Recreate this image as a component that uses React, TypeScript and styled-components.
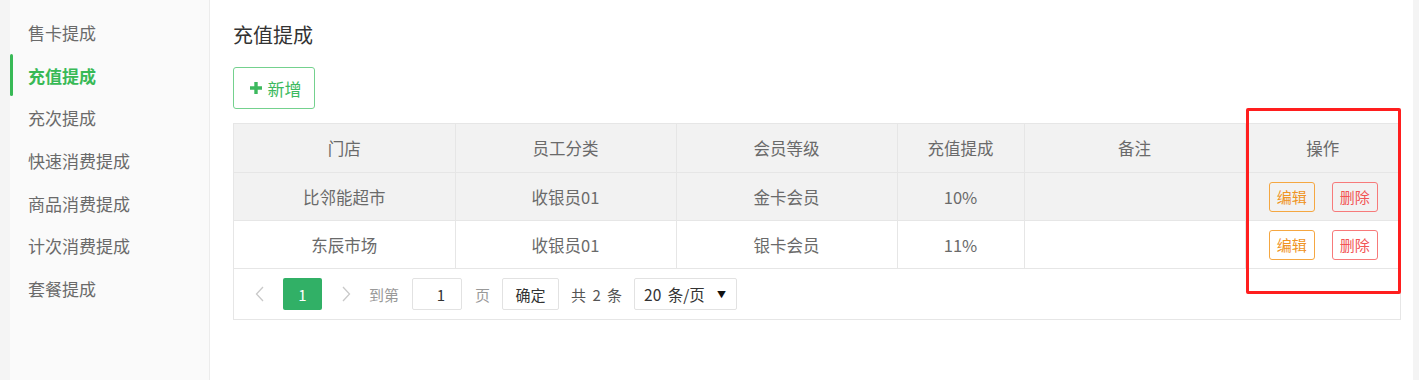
import styled, { createGlobalStyle } from "styled-components";

const GlobalStyle = createGlobalStyle`
  html, body {
    margin: 0;
    padding: 0;
    background: #ffffff;
  }
  body {
    font-family: "Noto Sans CJK SC", "Noto Sans", sans-serif;
  }
`;

const theme = {
  green: "#38b956",
  text: "#6a6a6a",
  dark: "#333333",
  line: "#e6e6e6",
  head: "#f2f2f2",
};

const Page = styled.div`
  display: flex;
  flex-direction: row;
  height: 380px;
  background: #f4f4f4;
`;

const Gutter = styled.div<{ $w: number }>`
  width: ${(p) => p.$w}px;
  flex-shrink: 0;
  background: #f4f4f4;
`;

const Sidebar = styled.nav`
  width: 199px;
  flex-shrink: 0;
  background: #fafafa;
  border-right: 1px solid #ececec;
  padding-top: 11px;
  display: flex;
  flex-direction: column;
`;

const NavItem = styled.div<{ $active?: boolean }>`
  position: relative;
  height: 42.7px;
  display: flex;
  align-items: center;
  padding-left: 18px;
  font-size: 17px;
  color: ${(p) => (p.$active ? theme.green : theme.text)};
  font-weight: ${(p) => (p.$active ? 700 : 400)};
  &::before {
    content: "";
    display: ${(p) => (p.$active ? "block" : "none")};
    position: absolute;
    left: 0;
    top: 0;
    bottom: 0;
    width: 3px;
    border-radius: 2px;
    background: ${theme.green};
  }
`;

const Main = styled.main`
  flex: 1;
  background: #ffffff;
  padding: 21px 12px 0 23px;
  display: flex;
  flex-direction: column;
  align-items: flex-start;
`;

const Title = styled.h2`
  margin: 0 0 18px 0;
  font-size: 20px;
  line-height: 28px;
  font-weight: 400;
  color: ${theme.dark};
`;

const AddButton = styled.button`
  height: 42px;
  width: 82px;
  box-sizing: border-box;
  border: 1px solid #74d18e;
  border-radius: 3px;
  background: #ffffff;
  color: #3cb95e;
  font-family: inherit;
  font-size: 17px;
  display: flex;
  align-items: center;
  justify-content: center;
  gap: 5px;
  padding: 0 0 0 2px;
  margin-bottom: 14px;
`;

const TableBox = styled.div`
  position: relative;
  width: 100%;
  box-sizing: border-box;
  border: 1px solid ${theme.line};
`;

const Table = styled.table`
  width: 100%;
  border-collapse: collapse;
  table-layout: fixed;
  font-size: 16.5px;
  color: ${theme.text};
`;

const HeadCell = styled.th`
  height: 48px;
  font-weight: 400;
  background: ${theme.head};
  border-right: 1px solid ${theme.line};
  border-bottom: 1px solid ${theme.line};
  text-align: center;
  padding: 0;
  &:last-child {
    border-right: none;
  }
`;

const Row = styled.tr<{ $shade?: boolean }>`
  background: ${(p) => (p.$shade ? theme.head : "#ffffff")};
`;

const Cell = styled.td`
  height: 47px;
  border-right: 1px solid ${theme.line};
  border-bottom: 1px solid ${theme.line};
  text-align: center;
  padding: 0;
  &:last-child {
    border-right: none;
  }
`;

const Actions = styled.div`
  display: flex;
  justify-content: center;
  gap: 17px;
  padding-left: 1px;
`;

const ActionButton = styled.button<{ $tone: "edit" | "del" }>`
  width: 46px;
  height: 30px;
  box-sizing: border-box;
  padding: 0;
  border-radius: 3px;
  background: transparent;
  font-family: inherit;
  font-size: 15px;
  border: 1px solid ${(p) => (p.$tone === "edit" ? "#f5a741" : "#f77a7a")};
  color: ${(p) => (p.$tone === "edit" ? "#ef9424" : "#f25555")};
`;

const Footer = styled.div`
  height: 50px;
  display: flex;
  align-items: center;
  padding-left: 21px;
  font-size: 15px;
  color: #999999;
`;

const Arrow = styled.span<{ $gap: number }>`
  display: flex;
  margin-right: ${(p) => p.$gap}px;
`;

const PageNum = styled.span`
  width: 39px;
  height: 32px;
  border-radius: 2px;
  background: #31b066;
  color: #ffffff;
  display: flex;
  align-items: center;
  justify-content: center;
  margin-right: 20px;
`;

const Label = styled.span<{ $gap: number; $dark?: boolean }>`
  margin-right: ${(p) => p.$gap}px;
  color: ${(p) => (p.$dark ? "#555555" : "#999999")};
  word-spacing: 3px;
`;

const Box = styled.span<{ $w: number; $gap: number }>`
  width: ${(p) => p.$w}px;
  height: 32px;
  box-sizing: border-box;
  border: 1px solid #e2e2e2;
  border-radius: 2px;
  display: flex;
  align-items: center;
  color: ${theme.dark};
  margin-right: ${(p) => p.$gap}px;
`;

const InputBox = styled(Box)`
  justify-content: flex-end;
  padding-right: 16px;
`;

const ConfirmBox = styled(Box)`
  justify-content: center;
`;

const SelectBox = styled(Box)`
  justify-content: space-between;
  padding: 0 10px 0 9px;
  font-size: 15.5px;
  word-spacing: 3px;
`;

const Caret = styled.span`
  font-size: 9px;
  color: #111111;
`;

const Highlight = styled.div`
  position: absolute;
  left: 1012px;
  top: -16px;
  width: 155px;
  height: 186px;
  box-sizing: border-box;
  border: 3px solid #ff1e1e;
  border-radius: 2px;
  pointer-events: none;
`;

const menu = ["售卡提成", "充值提成", "充次提成", "快速消费提成", "商品消费提成", "计次消费提成", "套餐提成"];
const columns = [
  { title: "门店", w: 221 },
  { title: "员工分类", w: 221 },
  { title: "会员等级", w: 221 },
  { title: "充值提成", w: 127 },
  { title: "备注", w: 221 },
  { title: "操作", w: undefined },
];
const rows = [
  { store: "比邻能超市", staff: "收银员01", level: "金卡会员", rate: "10%" },
  { store: "东辰市场", staff: "收银员01", level: "银卡会员", rate: "11%" },
];

function Plus() {
  return (
    <svg width="14" height="14" viewBox="0 0 14 14">
      <path d="M7 1v12M1 7h12" stroke="#3cb95e" strokeWidth="3.4" />
    </svg>
  );
}

function Chevron({ dir }: { dir: "left" | "right" }) {
  return (
    <svg width="9" height="16" viewBox="0 0 9 16">
      <path
        d={dir === "left" ? "M8 1L1.5 8L8 15" : "M1 1L7.5 8L1 15"}
        stroke="#c9c9c9"
        strokeWidth="1.3"
        fill="none"
      />
    </svg>
  );
}

export default function App() {
  return (
    <>
      <GlobalStyle />
      <Page>
        <Gutter $w={10} />
        <Sidebar>
          {menu.map((m) => (
            <NavItem key={m} $active={m === "充值提成"}>
              {m}
            </NavItem>
          ))}
        </Sidebar>
        <Main>
          <Title>充值提成</Title>
          <AddButton>
            <Plus />
            新增
          </AddButton>
          <TableBox>
            <Table>
              <colgroup>
                {columns.map((c) => (
                  <col key={c.title} style={c.w ? { width: c.w } : undefined} />
                ))}
              </colgroup>
              <thead>
                <tr>
                  {columns.map((c) => (
                    <HeadCell key={c.title}>{c.title}</HeadCell>
                  ))}
                </tr>
              </thead>
              <tbody>
                {rows.map((r, i) => (
                  <Row key={r.store} $shade={i === 0}>
                    <Cell>{r.store}</Cell>
                    <Cell>{r.staff}</Cell>
                    <Cell>{r.level}</Cell>
                    <Cell>{r.rate}</Cell>
                    <Cell></Cell>
                    <Cell>
                      <Actions>
                        <ActionButton $tone="edit">编辑</ActionButton>
                        <ActionButton $tone="del">删除</ActionButton>
                      </Actions>
                    </Cell>
                  </Row>
                ))}
              </tbody>
            </Table>
            <Footer>
              <Arrow $gap={19}>
                <Chevron dir="left" />
              </Arrow>
              <PageNum>1</PageNum>
              <Arrow $gap={18}>
                <Chevron dir="right" />
              </Arrow>
              <Label $gap={13}>到第</Label>
              <InputBox $w={50} $gap={13}>1</InputBox>
              <Label $gap={12}>页</Label>
              <ConfirmBox $w={57} $gap={12}>确定</ConfirmBox>
              <Label $gap={12} $dark>
                共 2 条
              </Label>
              <SelectBox $w={103} $gap={0}>
                20 条/页
                <Caret>▼</Caret>
              </SelectBox>
            </Footer>
            <Highlight />
          </TableBox>
        </Main>
        <Gutter $w={6} />
      </Page>
    </>
  );
}
